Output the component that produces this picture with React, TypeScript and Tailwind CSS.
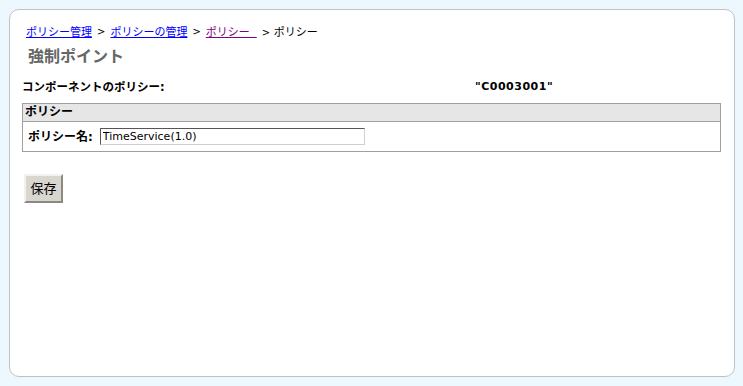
export default function App() {
  return (
    <div className="w-[743px] h-[386px] bg-[#ecf8fd] pt-[9px] pl-[9px] font-['DejaVu_Sans','Noto_Sans_CJK_JP',sans-serif] text-[12px] text-black">
      <div className="w-[726px] h-[368px] bg-white border border-[#bfc3c7] rounded-[10px] flex flex-col">
        {/* breadcrumb */}
        <div className="pl-[16px] pt-[12px] h-[32px] flex items-center gap-[5px] text-[11px] leading-none">
          <a className="text-[#0000ff] underline">ポリシー管理</a>
          <span className="text-[10px]">&gt;</span>
          <a className="text-[#0000ff] underline">ポリシーの管理</a>
          <span className="text-[10px]">&gt;</span>
          <a className="text-[#800080] underline whitespace-pre">{"ポリシー  "}</a>
          <span><span className="text-[10px]">&gt;</span> ポリシー</span>
        </div>
        <div className="pl-[18px] pt-[2px] h-[26px] text-[16px] font-semibold text-[#666666] leading-[26px]">強制ポイント</div>
        <div className="flex pl-[12px] pt-[10px] h-[28px] font-bold leading-[18px]">
          <span className="w-[453px] text-[11.5px]">コンポーネントのポリシー:</span>
          <span className="font-['DejaVu_Sans',sans-serif] text-[11px] tracking-[0.5px]">"C0003001"</span>
        </div>
        <div className="ml-[12px] mt-[7px] w-[699px] border border-[#a0a0a0]">
          <div className="h-[18px] bg-[#e6e6e6] border-b border-[#a0a0a0] pl-[2px] font-bold leading-[17px]">ポリシー</div>
          <div className="h-[29px] flex items-center pl-[5px] gap-[7px]">
            <span className="font-bold">ポリシー名:</span>
            <input
              readOnly
              value="TimeService(1.0)"
              className="w-[265px] h-[17px] px-[2px] text-[11px] font-['DejaVu_Sans',sans-serif] border border-t-[#555] border-l-[#555] border-b-[#d4d0c8] border-r-[#d4d0c8] outline-none"
            />
          </div>
        </div>
        <div className="pl-[14px] pt-[22px]">
          <button className="w-[39px] h-[29px] bg-[#d8d6cf] border-2 border-t-[#f4f2ec] border-l-[#f4f2ec] border-b-[#8a8880] border-r-[#8a8880] text-[13px]">保存</button>
        </div>
      </div>
    </div>
  );
}
